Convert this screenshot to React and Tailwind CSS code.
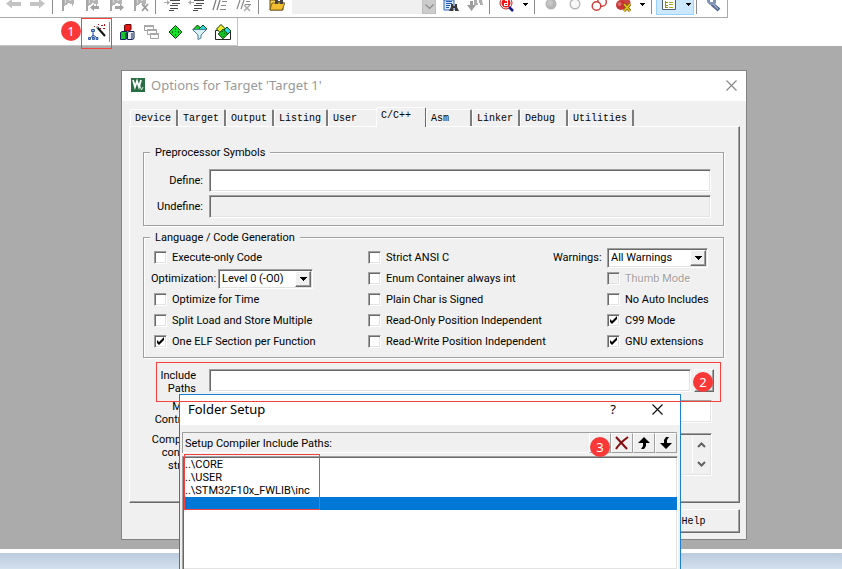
import React from "react";

const SUNKEN =
  "border border-t-[#a0a0a0] border-l-[#a0a0a0] border-b-white border-r-white shadow-[inset_1px_1px_0_#696969,inset_-1px_-1px_0_#e3e3e3]";
const RAISED =
  "border border-t-white border-l-white border-b-[#696969] border-r-[#696969] bg-[#f0f0f0] shadow-[inset_-1px_-1px_0_#a0a0a0]";

/* ---------- toolbar pieces ---------- */

function Tool({ label, tall, children }) {
  return (
    <button type="button" aria-label={label} className="flex w-6 shrink-0 justify-center">
      <svg viewBox={tall ? "0 0 18 18" : "0 0 16 14"} className={tall ? "h-[18px] w-[18px]" : "h-3.5 w-4"}>
        {children}
      </svg>
    </button>
  );
}

function Sep() {
  return <span className="mr-1 ml-0.5 h-3.5 w-px shrink-0 bg-[#8c8c8c]" />;
}

function Caret({ label }) {
  return (
    <button type="button" aria-label={label} className="flex w-3.5 shrink-0 justify-center pt-[3px]">
      <svg viewBox="0 0 5 3" className="h-[3px] w-[5px]">
        <path d="M0 0h5v1H4v1H3v1H2V2H1V1H0z" fill="#000" />
      </svg>
    </button>
  );
}

function Bookmark({ children }) {
  return (
    <>
      <path d="M1 0h2v11H1z" fill="#a6a6a6" />
      <path d="M3 0h3v5H4v1H3zM6 0h3v3H7v1H6zM9 0h4v4h-1v2h-1V4H9z" fill="#b4b4b4" />
      <path d="M4 0h1v3H4zM8 0h2v1H8z" fill="#d9d9d9" />
      {children}
    </>
  );
}

function TopToolbar() {
  return (
    <div className="flex h-[18px] w-[728px] items-start border-r border-b border-[#a9a9a9] bg-white pl-0.5">
      <Tool label="Back">
        <path d="M0 3.500L6 -1v3h9v4H6v2.500z" fill="#c3c3c3" />
      </Tool>
      <Tool label="Forward">
        <path d="M15 3.500L9 -1v3H0v4h9v2.500z" fill="#c3c3c3" />
      </Tool>
      <Sep />
      <Tool label="Toggle bookmark">
        <Bookmark />
      </Tool>
      <Tool label="Previous bookmark">
        <Bookmark>
          <path d="M5 7.500l4-3.500v2h5v3H9v2z" fill="#a3a3a3" />
        </Bookmark>
      </Tool>
      <Tool label="Next bookmark">
        <Bookmark>
          <path d="M15 7.500L11 4v2H6v3h5v2z" fill="#a3a3a3" />
        </Bookmark>
      </Tool>
      <Tool label="Clear bookmarks">
        <Bookmark>
          <path d="M9 4l6 7M15 4l-6 7" stroke="#9b9b9b" strokeWidth="1.800" />
        </Bookmark>
      </Tool>
      <Sep />
      <Tool label="Indent">
        <path d="M6 0h10v1H6zM8 3h8v1H8zM6 5h8v1H6zM6 8h8v1H6zM5 10h5v1H5z" fill="#4a4a4a" />
        <path d="M0 2h3V0l3 2.500-3 2.500V3H0z" fill="#aaa" />
      </Tool>
      <Tool label="Outdent">
        <path d="M6 0h10v1H6zM8 3h8v1H8zM6 5h8v1H6zM6 8h8v1H6zM5 10h5v1H5z" fill="#4a4a4a" />
        <path d="M6 2H3V0L0 2.500 3 5V3h3z" fill="#aaa" />
      </Tool>
      <Tool label="Comment">
        <path d="M4 0L1 10M8 0L5 10" stroke="#777" strokeWidth="1.200" />
        <path d="M10 1h5v1h-5zM9 5h5v1H9zM8 9h6v1H8z" fill="#888" />
      </Tool>
      <Tool label="Uncomment">
        <path d="M4 0L1 9M8 0L5 9" stroke="#888" strokeWidth="1.200" />
        <path d="M10 1h4v1h-4zM9 4h6v1H9z" fill="#888" />
        <path d="M8 5l6 6M14 5l-6 6" stroke="#aaa" strokeWidth="1.500" />
      </Tool>
      <Sep />
      <span className="w-0.5 shrink-0" />
      <Tool label="Open file">
        <path d="M1 0h7l1 2h5v8H1z" fill="#f5cf52" stroke="#5d4a12" />
        <path d="M3 3h13l-3 7H1z" fill="#f3bd31" stroke="#6b5313" strokeWidth=".8" />
        <path d="M6 0h3v4H6zM11 0h3v4h-3zM8 1h4v1H8z" fill="#444" />
      </Tool>
      <div className="ml-[3px] flex h-3.5 w-36 shrink-0 justify-end bg-[#f0f0f0]">
        <button type="button" aria-label="Search history" className="flex w-3.5 justify-center border border-t-0 border-[#bfbfbf] bg-[#cccccc] pt-1">
          <svg viewBox="0 0 9 6" className="h-1.5 w-[9px]">
            <path d="M.5 .5l4 4 4-4" fill="none" stroke="#8c8c8c" strokeWidth="1.200" />
          </svg>
        </button>
      </div>
      <span className="w-[3px] shrink-0" />
      <Tool label="Find in files">
        <path d="M1 0h10v10H1z" fill="#dbe8fa" stroke="#2e62b8" />
        <path d="M3 1h6v1H3zM3 3h6v1H3zM3 5h4v1H3zM3 7h3v1H3z" fill="#2457b5" />
        <path d="M8 4h2v2h2V4h2v3l2 4h-4V8h-2v3H6l2-4z" fill="#3a3a3a" />
      </Tool>
      <Tool label="Incremental find">
        <path d="M3 1h3v4h3L4.500 11 0 5h3z" fill="#9c9c9c" />
        <path d="M7 0h3v3h2V0h3l1 5h-3V3h-2v2H7z" fill="#adadad" />
      </Tool>
      <Sep />
      <Tool label="Debug session">
        <circle cx="8" cy="3" r="6" fill="#fff" stroke="#bd1c1c" />
        <circle cx="8" cy="3" r="4.500" fill="#f01515" />
        <path d="M6 3h3V1H7V0h3v6H6z" fill="#fff" />
        <path d="M7 4h2v1H7z" fill="#f01515" />
        <path d="M11 7l4 4" stroke="#121b83" strokeWidth="2.500" />
      </Tool>
      <Caret label="Debug options" />
      <Sep />
      <Tool label="Breakpoint">
        <circle cx="8" cy="4" r="5.500" fill="#b5b5b5" />
        <circle cx="7" cy="3" r="3" fill="#c6c6c6" />
      </Tool>
      <Tool label="Disable breakpoint">
        <circle cx="8" cy="4" r="4.800" fill="#f8f8f8" stroke="#b8b8b8" strokeWidth="1.400" />
      </Tool>
      <Tool label="Disable all breakpoints">
        <circle cx="11" cy="2" r="4.300" fill="#fff" stroke="#cf3a3a" strokeWidth="1.400" />
        <circle cx="5.500" cy="6" r="4.300" fill="#fff" stroke="#cf3a3a" strokeWidth="1.400" />
      </Tool>
      <Tool label="Kill all breakpoints">
        <circle cx="11" cy="3" r="4.600" fill="#c94545" />
        <circle cx="6" cy="5" r="5" fill="#c73434" />
        <circle cx="4.500" cy="4" r="2" fill="#dc6f6f" />
        <path d="M9 4l6 7M15 4l-6 7" stroke="#6d5a00" strokeWidth="3" />
        <path d="M9 4l6 7M15 4l-6 7" stroke="#e2c31a" strokeWidth="1.800" />
      </Tool>
      <Caret label="Breakpoint options" />
      <Sep />
      <div className="flex h-[15px] w-[38px] shrink-0 border border-t-0 border-[#99d1ff] bg-[#cce8ff]">
        <Tool label="Window layout">
          <path d="M1.500 -1h13V9.500h-13z" fill="#fff" stroke="#4f5c74" />
          <path d="M4 1h1v7H4zM5 2h2v1H5zM5 5h2v1H5zM5 7h2v1H5z" fill="#8f8f12" />
          <path d="M8 2h4v1H8zM8 4h4v1H8zM8 7h4v1H8z" fill="#a9a91b" />
        </Tool>
        <Caret label="Window layout options" />
      </div>
      <Sep />
      <Tool label="Configuration">
        <path d="M7 4l7 6" stroke="#51658b" strokeWidth="4" />
        <path d="M2 0v2l3 3h4l2-2V0H8v2H5V0z" fill="#7e93b5" />
        <path d="M8 4l5 5" stroke="#9db0cf" strokeWidth="1.200" />
      </Tool>
    </div>
  );
}

function Diamond({ x, y, r, fill }) {
  return (
    <path
      d={`M${x} ${y - r}L${x + r} ${y}L${x} ${y + r}L${x - r} ${y}z`}
      fill={fill}
      stroke="#063f06"
      strokeWidth="1"
    />
  );
}

function BuildToolbar() {
  return (
    <div className="flex h-7 bg-white">
      <div className="flex w-[238px] items-center border-r border-b border-[#c4c4c4] pl-[85px]">
        <Tool label="Options for target" tall>
          <path d="M9 4L17 13" stroke="#111" strokeWidth="2" />
          <path d="M8.500 3.500l1.500 1.500" stroke="#9aa" strokeWidth="1.500" />
          <path d="M10 1h1v1h-1zM13 2h2v1h-2zM16 1h1v2h-1zM12 5h1v1h-1zM15 5h2v1h-2zM6 3h1v1H6z" fill="#b01818" />
          <path d="M5 8v4M5 12L2.500 15M5 12l3 2M5 12v4" fill="none" stroke="#2750a5" />
          <path d="M3.500 6.500h3v2h-3zM.500 14.500h2v2h-2zM4.500 14.500h2v2h-2zM8 14.500h2v2H8z" fill="#7fb2f2" stroke="#173f8f" strokeWidth=".8" />
        </Tool>
        <span className="mr-[5px] h-5 w-px shrink-0 bg-[#8c8c8c]" />
        <Tool label="Manage project items" tall>
          <path d="M6.500 2.500l1.500-1h5v5l-1.500 1.500h-5z" fill="#e51616" stroke="#620909" />
          <path d="M2.500 9.500L4 8.500h5v7l-1.500 1h-5z" fill="#13c42c" stroke="#10205a" />
          <path d="M9.500 9.500L11 8.500h5v7l-1.500 1h-5z" fill="#e3e8ee" stroke="#10205a" />
          <path d="M8 10v6M14 10v6" stroke="#10205a" />
        </Tool>
        <Tool label="Manage windows" tall>
          <path d="M2.500 2.500h9v5h-9zM5.500 6.500h9v5h-9zM8.500 10.500h8v5h-8z" fill="#fff" stroke="#a0a0a0" />
          <path d="M2 2h10v2H2zM5 6h10v2H5zM8 10h9v2H8z" fill="#a8a8a8" />
        </Tool>
        <Tool label="Manage run-time environment" tall>
          <Diamond x={9.500} y={9} r={6.500} fill="#12e527" />
          <path d="M9 5h1v2H9zM6 8h1v2H6zM12 8h1v2h-1zM9 11h1v2H9zM9 8h1v1H9z" fill="#045e0b" />
        </Tool>
        <Tool label="Select software packs" tall>
          <Diamond x={7.500} y={6} r={4} fill="#12d527" />
          <Diamond x={13} y={6} r={4} fill="#2bd8e2" />
          <path d="M2.500 6.500h14L11 12v3l-3 1.500V12z" fill="#d9f1f7" stroke="#4b7c92" />
        </Tool>
        <Tool label="Pack installer" tall>
          <path d="M1.500 7.500h15v9h-15z" fill="#fff" stroke="#222" />
          <Diamond x={7} y={6} r={4.500} fill="#eee82a" />
          <Diamond x={13} y={8} r={4} fill="#2bd8e2" />
          <Diamond x={9} y={11} r={4.800} fill="#12c527" />
          <path d="M8 8h1v1H8zM10 10h1v1h-1zM7 11h1v1H7zM9 13h1v1H9z" fill="#045e0b" />
        </Tool>
      </div>
    </div>
  );
}

/* ---------- form pieces ---------- */

function Check({ label, checked, disabled }) {
  return (
    <label className={"flex items-center gap-[5px] whitespace-nowrap " + (disabled ? "text-[#a0a0a0] [text-shadow:1px_1px_0_#fff]" : "")}>
      <span className="grid size-[13px] shrink-0">
        <input
          type="checkbox"
          defaultChecked={checked}
          disabled={disabled}
          className={"peer col-start-1 row-start-1 size-[13px] appearance-none bg-white disabled:bg-[#f0f0f0] " + SUNKEN}
        />
        <svg viewBox="0 0 13 13" className="pointer-events-none invisible col-start-1 row-start-1 size-[13px] peer-checked:visible">
          <path d="M3 5v3l2 2 5-5V2L5 7z" fill="#000" />
        </svg>
      </span>
      {label}
    </label>
  );
}

function Dropdown({ id, value, className }) {
  return (
    <span className={"grid h-5 " + className}>
      <select id={id} defaultValue={value} className={"col-start-1 row-start-1 appearance-none bg-white pl-[3px] " + SUNKEN}>
        <option>{value}</option>
      </select>
      <span className={"pointer-events-none col-start-1 row-start-1 m-0.5 flex w-4 items-center justify-center justify-self-end " + RAISED}>
        <svg viewBox="0 0 7 4" className="h-1 w-[7px]">
          <path d="M0 0h7v1H6v1H5v1H4v1H3V3H2V2H1V1H0z" fill="#000" />
        </svg>
      </span>
    </span>
  );
}

function Group({ title, className, children }) {
  return (
    <fieldset className={"border border-[#a0a0a0] shadow-[1px_1px_0_#fff,inset_1px_1px_0_#fff] " + className}>
      <legend className="ml-1.5 bg-[#f0f0f0] px-[5px] leading-[13px]">{title}</legend>
      {children}
    </fieldset>
  );
}

const TABS = [
  ["Device", "w-12"],
  ["Target", "w-12"],
  ["Output", "w-12"],
  ["Listing", "w-[54px]"],
  ["User", "w-12"],
  ["C/C++", "w-[50px]"],
  ["Asm", "w-[46px]"],
  ["Linker", "w-12"],
  ["Debug", "w-12"],
  ["Utilities", "w-[66px]"],
];

function Tab({ name, width }) {
  const active = name === "C/C++";
  return (
    <button
      type="button"
      role="tab"
      aria-selected={active}
      className={
        "flex shrink-0 items-center rounded-t-xs border-t border-l border-white bg-[#f0f0f0] pl-1 whitespace-nowrap " +
        (active
          ? "z-10 -mb-px h-5 border-r border-r-[#696969] pb-1 "
          : name === "User"
            ? "h-[17px] pt-px "
            : "h-[17px] border-r-2 border-r-[#7c7c7c] pt-px ") +
        width
      }
    >
      {name}
    </button>
  );
}

function CodeOptions() {
  return (
    <Group title="Language / Code Generation" className="mt-[5px] pb-[5px]">
      <div className="mt-[3px] grid auto-rows-[21px] grid-cols-[214px_185px_54px_1fr] items-center pl-2.5">
        <Check label="Execute-only Code" />
        <Check label="Strict ANSI C" />
        <label htmlFor="warnings">Warnings:</label>
        <Dropdown id="warnings" value="All Warnings" className="w-[101px]" />

        <div className="-ml-[3px] flex items-center justify-between pr-[55px]">
          <label htmlFor="optimization">Optimization:</label>
          <Dropdown id="optimization" value="Level 0 (-O0)" className="w-[95px]" />
        </div>
        <Check label="Enum Container always int" />
        <span />
        <Check label="Thumb Mode" disabled />

        <Check label="Optimize for Time" />
        <Check label="Plain Char is Signed" />
        <span />
        <Check label="No Auto Includes" />

        <Check label="Split Load and Store Multiple" />
        <Check label="Read-Only Position Independent" />
        <span />
        <Check label="C99 Mode" checked />

        <Check label="One ELF Section per Function" checked />
        <Check label="Read-Write Position Independent" />
        <span />
        <Check label="GNU extensions" checked />
      </div>
    </Group>
  );
}

function CloseMark({ color }) {
  return (
    <svg viewBox="0 0 11 11" className="size-[11px]">
      <path d="M.500 .500l10 10M10.500 .500l-10 10" stroke={color} strokeWidth="1.200" />
    </svg>
  );
}

function OptionsWindow() {
  return (
    <section
      aria-label="Options for Target"
      className="absolute top-[24px] left-[121px] w-[626px] border border-[#838383] bg-[#f0f0f0] pb-1.5"
    >
      <header className="flex h-[30px] items-center bg-white px-[9px] pb-0.5">
        <svg viewBox="0 0 14 14" className="size-3.5">
          <path d="M0 0h14v14H0z" fill="#2a6e44" />
          <path d="M2 2l2 7 2-6 2 6 2-7" fill="none" stroke="#fff" strokeWidth="1.800" />
          <path d="M9 8l1.500 4L12 9" fill="none" stroke="#cfe6d6" />
        </svg>
        <h1 className="ml-1.5 flex-1 font-['Noto_Sans',sans-serif] text-[13px] text-[#999]">Options for Target 'Target 1'</h1>
        <button type="button" aria-label="Close options">
          <CloseMark color="#8a8a8a" />
        </button>
      </header>

      <div role="tablist" className="mt-1.5 flex h-[19px] items-end pl-2 font-['Liberation_Mono',monospace] text-[10px] leading-3">
        {TABS.map(([name, width]) => (
          <Tab key={name} name={name} width={width} />
        ))}
      </div>

      <div className="mr-1.5 ml-[7px] h-[377px] border border-t-white border-l-white border-r-[#696969] border-b-[#696969] pt-[19px] pr-[15px] pl-[13px] shadow-[inset_-1px_-1px_0_#a0a0a0]">
        <Group title="Preprocessor Symbols" className="pb-[7px]">
          <div className="mt-2.5 mr-3 grid grid-cols-[59px_1fr] items-center gap-x-1.5 gap-y-[3px]">
            <label htmlFor="define" className="text-right">Define:</label>
            <input id="define" className={"h-[23px] min-w-0 bg-white px-1 " + SUNKEN} />
            <label htmlFor="undefine" className="text-right">Undefine:</label>
            <input id="undefine" readOnly className={"h-[23px] min-w-0 bg-[#f0f0f0] px-1 " + SUNKEN} />
          </div>
        </Group>

        <CodeOptions />

        <div className="mt-[11px] mr-2.5 grid grid-cols-[53px_1fr] items-start gap-x-[13px] text-right leading-[13px]">
          <label htmlFor="include" className="h-[31px]">Include Paths</label>
          <div className="flex gap-[3px]">
            <input id="include" className={"h-[23px] min-w-0 flex-1 bg-white px-1 " + SUNKEN} />
            <button type="button" aria-label="Browse include paths" className={"h-[23px] w-5 " + RAISED} />
          </div>
          <label htmlFor="misc" className="h-[33px]">Misc Controls</label>
          <input id="misc" className={"mr-0.5 h-[23px] min-w-0 bg-white px-1 " + SUNKEN} />
          <label htmlFor="compiler">Compiler control string</label>
          <div className={"mr-0.5 flex h-[43px] justify-end bg-[#f0f0f0] p-0.5 " + SUNKEN}>
            <textarea id="compiler" readOnly className="min-w-0 flex-1 resize-none" />
            <div className="flex w-[17px] flex-col items-center justify-between border-l border-white py-1.5">
              <svg viewBox="0 0 9 6" className="h-1.5 w-[9px]">
                <path d="M1 5l3.500-3.500L8 5" fill="none" stroke="#606060" strokeWidth="2" />
              </svg>
              <svg viewBox="0 0 9 6" className="h-1.5 w-[9px]">
                <path d="M1 1l3.500 3.500L8 1" fill="none" stroke="#606060" strokeWidth="2" />
              </svg>
            </div>
          </div>
        </div>
      </div>

      <div className="mt-1.5 mr-1.5 flex justify-end">
        <button type="button" className={"h-6 w-[93px] font-['Liberation_Mono',monospace] text-[10px] " + RAISED}>
          Help
        </button>
      </div>
    </section>
  );
}

/* ---------- folder window ---------- */

function ListTool({ label, children }) {
  return (
    <button type="button" aria-label={label} className="flex h-5 w-[22px] items-center justify-center border border-t-white border-l-white border-r-[#a0a0a0] border-b-[#a0a0a0]">
      <svg viewBox="0 0 14 14" className="size-3.5">
        {children}
      </svg>
    </button>
  );
}

const PATHS = ["..\\CORE", "..\\USER", "..\\STM32F10x_FWLIB\\inc"];

function FolderWindow() {
  return (
    <section
      aria-label="Folder Setup"
      className="absolute top-[394px] bottom-0 left-[179px] flex w-[502px] flex-col border border-b-0 border-[#1a80d2] bg-[#f0f0f0]"
    >
      <header className="flex h-[30px] items-center bg-white pr-[17px] pb-0.5 pl-2">
        <h2 className="flex-1 font-['Noto_Sans',sans-serif] text-[13px]">Folder Setup</h2>
        <button type="button" aria-label="Help on folders" className="mr-9 font-['Noto_Sans',sans-serif] text-[13px]">?</button>
        <button type="button" aria-label="Close folder setup">
          <CloseMark color="#111" />
        </button>
      </header>
      <div className="mt-[7px] mr-[3px] ml-0.5 flex h-[21px] items-center border-t border-l border-[#a0a0a0] pl-0.5 shadow-[inset_0_-1px_0_#fff]">
        <span id="paths-label" className="flex-1">Setup Compiler Include Paths:</span>
        <ListTool label="New path">
          <path d="M2 2h2v1H2z" fill="#999" />
        </ListTool>
        <ListTool label="Delete path">
          <path d="M1 1l11 12M13 1C9 4 4 8 1 13" fill="none" stroke="#840d0d" strokeWidth="2" />
        </ListTool>
        <ListTool label="Move path up">
          <path d="M7 1l6 6H9v3l-2 3H4l2-3V7H1z" fill="#000" />
        </ListTool>
        <ListTool label="Move path down">
          <path d="M7 13L1 7h4V4l2-3h3L8 4v3h5z" fill="#000" />
        </ListTool>
      </div>
      <ul aria-labelledby="paths-label" className={"mt-[3px] mr-0.5 ml-0.5 flex-1 border-b-0 bg-white pt-px pl-px leading-[13px] " + SUNKEN}>
        {PATHS.map((path) => (
          <li key={path} className="h-[13px] pl-px">{path}</li>
        ))}
        <li className="h-[13px] bg-[#0078d7]" />
      </ul>
    </section>
  );
}

function Badge({ n, className }) {
  return (
    <span className={"absolute flex size-5 items-center justify-center rounded-full bg-[#fa3838] font-['Noto_Sans',sans-serif] text-[13px] text-white " + className}>
      {n}
    </span>
  );
}

export default function App() {
  return (
    <div className="relative flex h-screen flex-col overflow-hidden bg-white font-['Roboto',sans-serif] text-[11px] leading-[15px] text-black">
      <TopToolbar />
      <BuildToolbar />
      <main className="relative flex-1 bg-[#ababab]">
        <OptionsWindow />
      </main>
      <footer className="h-5 border-t-4 border-white bg-gradient-to-b from-[#bccbdc] to-[#d3e0ed]" />
      <FolderWindow />

      <span className="absolute top-[18px] left-[81px] h-[31px] w-[31px] border border-[#f8403c]" />
      <span className="absolute top-[362px] left-[156px] h-10 w-[565px] border border-[#f8403c]" />
      <span className="absolute top-[454px] left-[184px] h-14 w-[136px] border border-[#f8403c]" />
      <Badge n="1" className="top-[21px] left-[61px]" />
      <Badge n="2" className="top-[372px] left-[693px]" />
      <Badge n="3" className="top-[437px] left-[590px]" />
    </div>
  );
}
